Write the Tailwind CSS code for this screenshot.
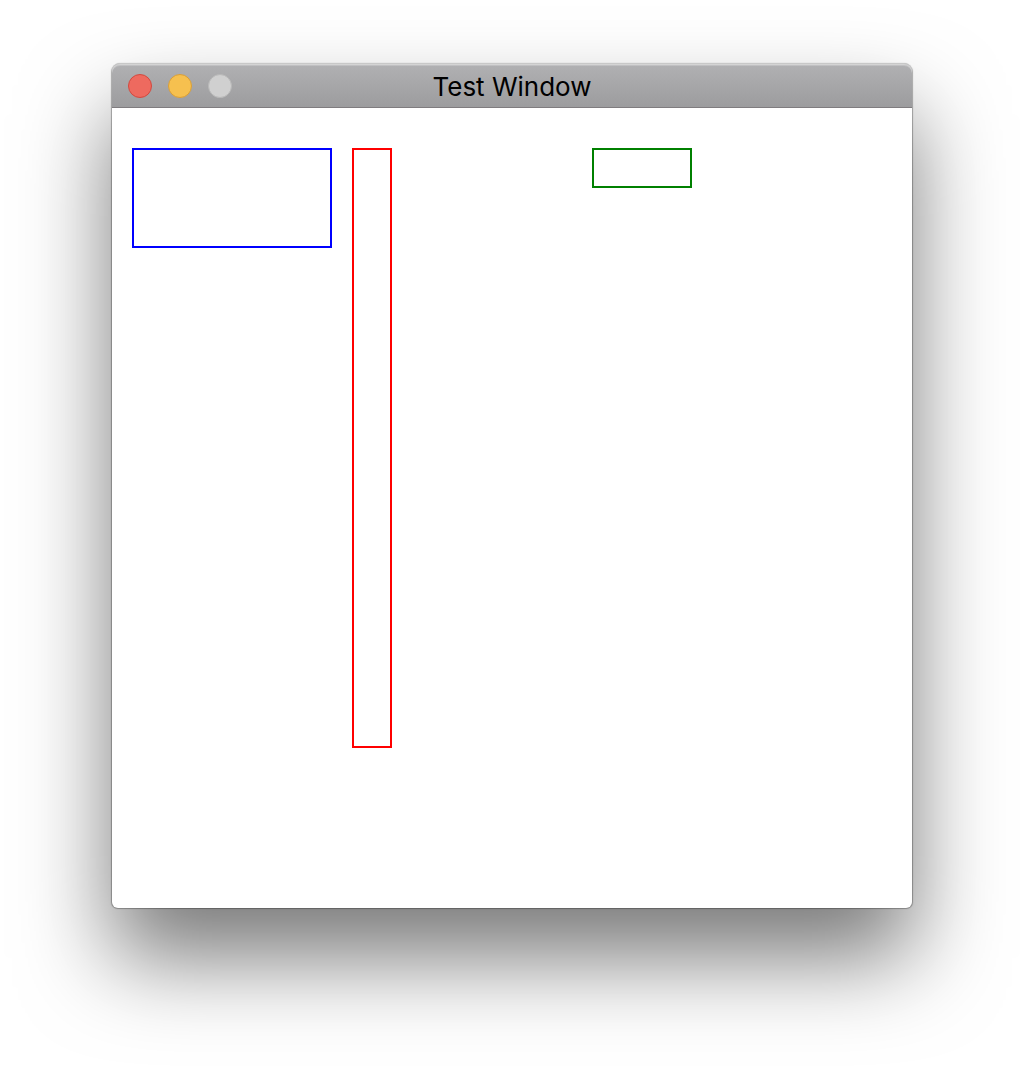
<!DOCTYPE html>
<html lang="en">
<head>
<meta charset="utf-8">
<title>Test Window</title>
<script src="https://cdn.jsdelivr.net/npm/@tailwindcss/browser@4"></script>
</head>
<body class="min-h-screen bg-white px-28 pt-16 pb-40 font-['Inter',sans-serif]">
<main class="rounded-t-lg rounded-b-md bg-white shadow-[0_0_1px_1px_rgba(0,0,0,0.3),0_50px_90px_rgba(0,0,0,0.53)]">
<header class="grid h-11 grid-cols-[1fr_auto_1fr] items-center rounded-t-lg border-b border-[#7f7c7f] bg-linear-to-b from-[#b1b1b3] to-[#9c9c9e] px-4 shadow-[inset_0_1px_0_#d4d4d4,inset_0_2px_0_#c0c0c2,0_-1px_0_#c8c8c8]">
<div class="flex gap-4">
<button aria-label="Close" class="size-6 rounded-full border border-[#d2493f] bg-[#ee6a5f]"></button>
<button aria-label="Minimize" class="size-6 rounded-full border border-[#d99f38] bg-[#f6c04f]"></button>
<button aria-label="Zoom" disabled class="size-6 rounded-full border border-[#b8b8b8] bg-[#d0d0d0]"></button>
</div>
<h1 class="pt-0.5 text-[26px] leading-8 text-black">Test Window</h1>
</header>
<section class="flex min-h-[800px] items-start px-5 pt-10">
<div class="h-[100px] w-[200px] border-2 border-[#0000ff]"></div>
<div class="ml-5 h-[600px] w-10 border-2 border-[#ff0000]"></div>
<div class="ml-[200px] h-10 w-[100px] border-2 border-[#008000]"></div>
</section>
</main>
</body>
</html>
